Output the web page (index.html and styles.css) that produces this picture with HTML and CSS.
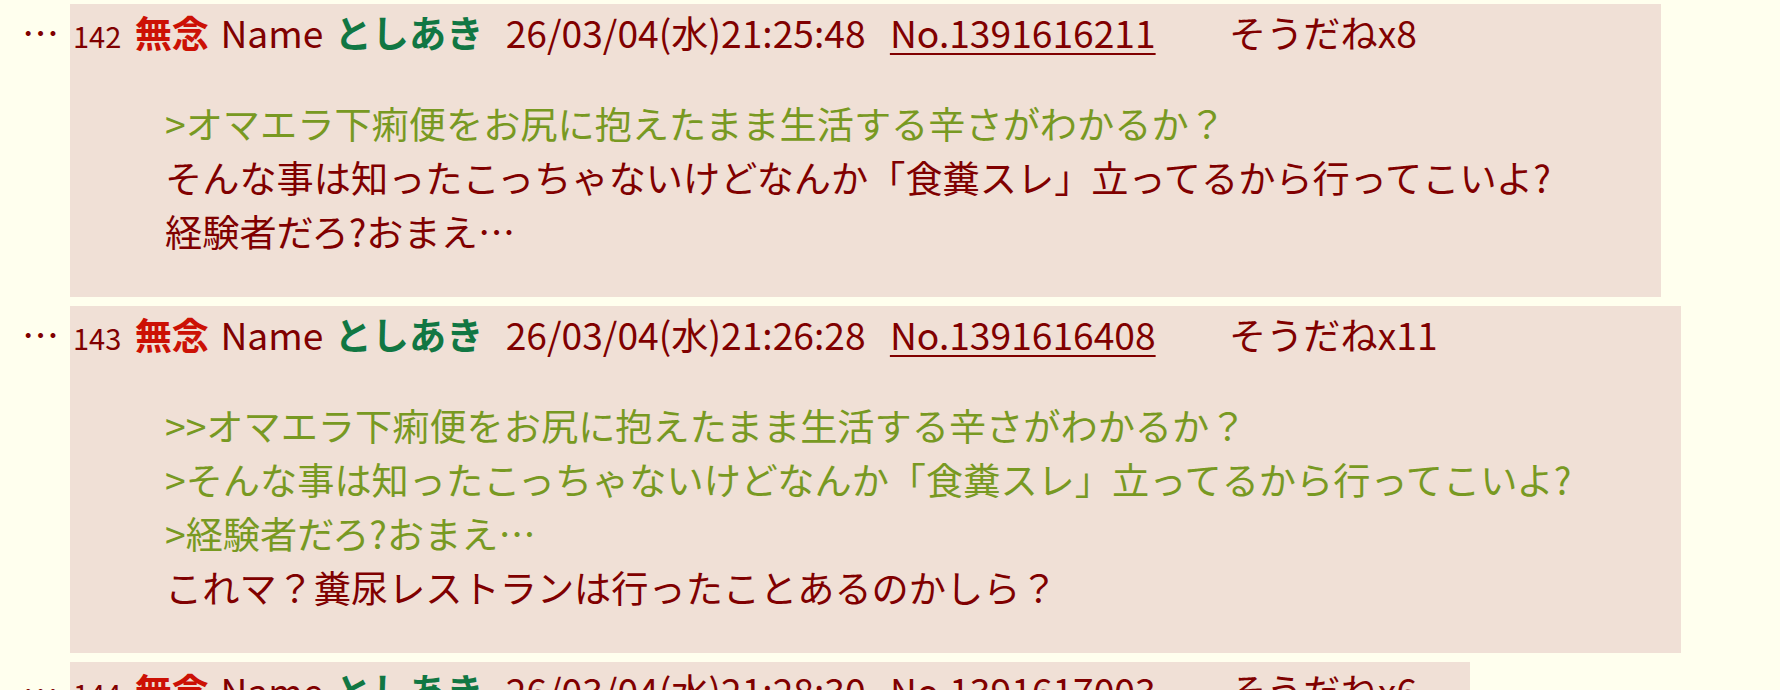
FILE: index.html
```html
<!DOCTYPE html>
<html lang="ja">
<head>
<meta charset="utf-8">
<title>thread</title>
<link rel="stylesheet" href="styles.css">
</head>
<body>
<div class="thread">
  <div class="row">
    <div class="rts">…</div>
    <div class="rtd">
      <div class="head"><span class="rsc">142</span> <span class="csb">無念</span> <span class="lbl">Name</span> <span class="cnm">としあき</span> <span class="cnw">26/03/04(水)21:25:48</span> <a class="cno">No.1391616211</a> <a class="sod">そうだねx8</a></div>
      <blockquote><span class="qt">&gt;オマエラ下痢便をお尻に抱えたまま生活する辛さがわかるか？</span><br>そんな事は知ったこっちゃないけどなんか「食糞スレ」立ってるから行ってこいよ?<br>経験者だろ?おまえ…</blockquote>
    </div>
  </div>
  <div class="row">
    <div class="rts">…</div>
    <div class="rtd">
      <div class="head"><span class="rsc">143</span> <span class="csb">無念</span> <span class="lbl">Name</span> <span class="cnm">としあき</span> <span class="cnw">26/03/04(水)21:26:28</span> <a class="cno">No.1391616408</a> <a class="sod">そうだねx11</a></div>
      <blockquote><span class="qt">&gt;&gt;オマエラ下痢便をお尻に抱えたまま生活する辛さがわかるか？</span><br><span class="qt">&gt;そんな事は知ったこっちゃないけどなんか「食糞スレ」立ってるから行ってこいよ?</span><br><span class="qt">&gt;経験者だろ?おまえ…</span><br>これマ？糞尿レストランは行ったことあるのかしら？</blockquote>
    </div>
  </div>
  <div class="row">
    <div class="rts">…</div>
    <div class="rtd rtd-narrow">
      <div class="head"><span class="rsc">144</span> <span class="csb">無念</span> <span class="lbl">Name</span> <span class="cnm">としあき</span> <span class="cnw">26/03/04(水)21:28:30</span> <a class="cno">No.1391617003</a> <a class="sod">そうだねx6</a></div>
    </div>
  </div>
</div>
</body>
</html>
```

FILE: styles.css
```css
html, body {
  margin: 0;
  padding: 0;
}
body {
  background: #FFFFEE;
  color: #800000;
  font-family: "Noto Sans CJK JP", "Noto Sans", sans-serif;
  font-size: 37.2px;
  overflow: hidden;
}
.thread {
  display: flex;
  flex-direction: column;
  gap: 9px;
  padding-top: 4px;
}
.row {
  display: flex;
  align-items: flex-start;
}
.rts {
  flex: none;
  width: 37px;
  padding-left: 22px;
  margin-right: 11px;
  padding-top: 1px;
}
.rtd {
  flex: none;
  background: #F0E0D6;
  padding: 1px 0 0 3px;
}
.rtd-narrow {
  width: 1397px;
  height: 200px;
}
.head {
  white-space: nowrap;
}
.rsc {
  font-size: 29px;
  margin-right: 5px;
}
.csb {
  color: #CC1105;
  font-weight: bold;
  margin-right: 3px;
}
.lbl {
  margin-right: 3px;
}
.cnm {
  color: #117743;
  font-weight: bold;
  margin-right: 14px;
}
.cnw {
  margin-right: 16px;
}
.cno {
  color: #800000;
  text-decoration: underline;
  text-decoration-thickness: 2px;
  text-underline-offset: 5px;
}
.sod {
  margin-left: 65px;
  color: #800000;
}
blockquote {
  margin: 37px 110px 39px 92px;
}
.qt {
  color: #789922;
}
```
